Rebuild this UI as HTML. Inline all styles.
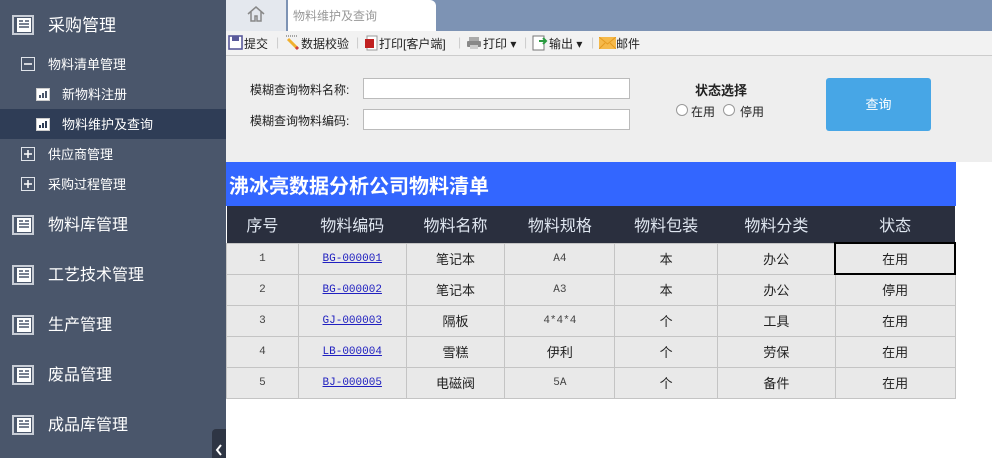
<!DOCTYPE html>
<html><head><meta charset="utf-8">
<style>
*{margin:0;padding:0;box-sizing:border-box}
body{width:992px;height:458px;overflow:hidden;background:#fff;font-family:"Liberation Sans","Noto Sans CJK SC",sans-serif;position:relative}
.side{position:absolute;left:0;top:0;width:226px;height:458px;background:#4a566b;color:#fff}
.it{position:absolute;left:0;width:226px;font-size:16px}
.ic{position:absolute;left:12px;width:22px;height:22px}
.sub{font-size:13px}
.abs{position:absolute}
.top{position:absolute;left:226px;top:0;width:766px;height:31px;background:#7d93b4}
.tb{position:absolute;left:226px;top:31px;width:766px;height:25px;background:#f2f2f2;border-bottom:1px solid #ccc;font-size:12px;color:#222}
.tb span{position:absolute;top:4px}
.form{position:absolute;left:226px;top:56px;width:766px;height:106px;background:#eeeeee;font-size:12px;color:#222}
.inp{position:absolute;width:267px;height:21px;background:#fff;border:1px solid #bbb}
table{position:absolute;left:226px;top:206px;border-collapse:collapse;width:730px}
th{background:#2a2f3e;color:#dfe6f0;font-weight:normal;font-size:16px;height:37px}
td{background:#e9e9e9;border:1px solid #c4c4c4;height:31px;text-align:center;font-size:13px;color:#222}
td.m{font-family:"Liberation Mono","Noto Sans CJK SC",monospace;font-size:11px;color:#444}
td a{color:#2020c0;text-decoration:underline}
</style></head><body>
<div class="side">
  <div class="abs" style="left:0;top:109px;width:226px;height:30px;background:#2f3d56"></div>
  <svg class="ic" style="top:14px" viewBox="0 0 22 22"><rect x="1" y="2" width="20" height="18" fill="none" stroke="#c8cdd6" stroke-width="2"/><rect x="5" y="4" width="14" height="14" fill="#fff"/><path d="M7 7h4M7 10h10M7 13h10M13 7h4" stroke="#4a566b" stroke-width="1.5"/></svg>
  <div class="it" style="top:11px;left:48px;font-size:17px">采购管理</div>
  <svg class="abs" style="left:21px;top:57px" width="14" height="14"><rect x="0.5" y="0.5" width="13" height="13" fill="none" stroke="#e0e4ea"/><path d="M3 7h8" stroke="#fff" stroke-width="1.5"/></svg>
  <div class="it sub" style="top:54px;left:48px">物料清单管理</div>
  <svg class="abs" style="left:36px;top:88px" width="14" height="13"><rect x="0.5" y="0.5" width="13" height="12" fill="#fff" stroke="#ccc"/><path d="M4 10V7M7 10V5M10 10V3" stroke="#4a566b" stroke-width="2"/></svg>
  <div class="it sub" style="top:84px;left:62px">新物料注册</div>
  <svg class="abs" style="left:36px;top:118px" width="14" height="13"><rect x="0.5" y="0.5" width="13" height="12" fill="#fff" stroke="#ccc"/><path d="M4 10V7M7 10V5M10 10V3" stroke="#2f3d56" stroke-width="2"/></svg>
  <div class="it sub" style="top:114px;left:62px">物料维护及查询</div>
  <svg class="abs" style="left:21px;top:147px" width="14" height="14"><rect x="0.5" y="0.5" width="13" height="13" fill="none" stroke="#e0e4ea"/><path d="M3 7h8M7 3v8" stroke="#fff" stroke-width="1.5"/></svg>
  <div class="it sub" style="top:144px;left:48px">供应商管理</div>
  <svg class="abs" style="left:21px;top:177px" width="14" height="14"><rect x="0.5" y="0.5" width="13" height="13" fill="none" stroke="#e0e4ea"/><path d="M3 7h8M7 3v8" stroke="#fff" stroke-width="1.5"/></svg>
  <div class="it sub" style="top:174px;left:48px">采购过程管理</div>
  <svg class="ic" style="top:214px" viewBox="0 0 22 22"><rect x="1" y="2" width="20" height="18" fill="none" stroke="#c8cdd6" stroke-width="2"/><rect x="5" y="4" width="14" height="14" fill="#fff"/><path d="M7 7h4M7 10h10M7 13h10M13 7h4" stroke="#4a566b" stroke-width="1.5"/></svg>
  <div class="it" style="top:211px;left:48px">物料库管理</div>
  <svg class="ic" style="top:264px" viewBox="0 0 22 22"><rect x="1" y="2" width="20" height="18" fill="none" stroke="#c8cdd6" stroke-width="2"/><rect x="5" y="4" width="14" height="14" fill="#fff"/><path d="M7 7h4M7 10h10M7 13h10M13 7h4" stroke="#4a566b" stroke-width="1.5"/></svg>
  <div class="it" style="top:261px;left:48px">工艺技术管理</div>
  <svg class="ic" style="top:314px" viewBox="0 0 22 22"><rect x="1" y="2" width="20" height="18" fill="none" stroke="#c8cdd6" stroke-width="2"/><rect x="5" y="4" width="14" height="14" fill="#fff"/><path d="M7 7h4M7 10h10M7 13h10M13 7h4" stroke="#4a566b" stroke-width="1.5"/></svg>
  <div class="it" style="top:311px;left:48px">生产管理</div>
  <svg class="ic" style="top:364px" viewBox="0 0 22 22"><rect x="1" y="2" width="20" height="18" fill="none" stroke="#c8cdd6" stroke-width="2"/><rect x="5" y="4" width="14" height="14" fill="#fff"/><path d="M7 7h4M7 10h10M7 13h10M13 7h4" stroke="#4a566b" stroke-width="1.5"/></svg>
  <div class="it" style="top:361px;left:48px">废品管理</div>
  <svg class="ic" style="top:414px" viewBox="0 0 22 22"><rect x="1" y="2" width="20" height="18" fill="none" stroke="#c8cdd6" stroke-width="2"/><rect x="5" y="4" width="14" height="14" fill="#fff"/><path d="M7 7h4M7 10h10M7 13h10M13 7h4" stroke="#4a566b" stroke-width="1.5"/></svg>
  <div class="it" style="top:411px;left:48px">成品库管理</div>
  <div class="abs" style="left:212px;top:429px;width:14px;height:29px;background:#2e3544;border-radius:4px 0 0 0"></div>
  <svg class="abs" style="left:214px;top:443px" width="10" height="14"><path d="M7 2L3 7l4 5" stroke="#fff" stroke-width="2" fill="none"/></svg>
</div>
<div class="top">
  <div class="abs" style="left:0;top:0;width:60px;height:31px;background:#e4e8ee"></div>
  <svg class="abs" style="left:20px;top:5px" width="20" height="18"><path d="M2 9L10 2l8 7M5 7v9h4v-5h2v5h4V7" fill="none" stroke="#888" stroke-width="1.5"/></svg>
  <div class="abs" style="left:62px;top:0;width:148px;height:31px;background:#fff;border-radius:0 6px 0 0;font-size:12px;color:#999;padding:7px 0 0 5px">物料维护及查询</div>
</div>
<div class="tb">
  <svg class="abs" style="left:2px;top:4px" width="15" height="15"><rect x="1" y="1" width="13" height="13" fill="#fff" stroke="#5a5a9a" stroke-width="1.6"/><rect x="4" y="1" width="7" height="5" fill="#5a5a9a"/></svg>
  <span style="left:18px">提交</span><span style="left:50px;color:#ccc">|</span>
  <svg class="abs" style="left:58px;top:3px" width="16" height="17"><path d="M2 2h12" stroke="#555" stroke-dasharray="1 1"/><path d="M4 5l9 9" stroke="#f0b030" stroke-width="3"/><path d="M12 13l2 2" stroke="#d04040" stroke-width="3"/></svg>
  <span style="left:75px">数据校验</span><span style="left:130px;color:#ccc">|</span>
  <svg class="abs" style="left:138px;top:4px" width="14" height="16"><rect x="3" y="1" width="10" height="14" fill="#fff" stroke="#999"/><rect x="1" y="4" width="9" height="9" fill="#c02020"/></svg>
  <span style="left:153px">打印[客户端]</span><span style="left:232px;color:#ccc">|</span>
  <svg class="abs" style="left:240px;top:5px" width="16" height="14"><rect x="3" y="1" width="10" height="4" fill="#aaa"/><rect x="1" y="5" width="14" height="6" rx="1" fill="#888"/><rect x="4" y="9" width="8" height="4" fill="#ccc"/></svg>
  <span style="left:257px">打印 ▾</span><span style="left:298px;color:#ccc">|</span>
  <svg class="abs" style="left:306px;top:3px" width="16" height="17"><rect x="1" y="2" width="11" height="14" fill="#fff" stroke="#777"/><path d="M7 7h7M11 4l3 3-3 3" stroke="#2a9a40" stroke-width="2" fill="none"/></svg>
  <span style="left:323px">输出 ▾</span><span style="left:365px;color:#ccc">|</span>
  <svg class="abs" style="left:373px;top:6px" width="17" height="12"><rect x="0" y="0" width="17" height="12" fill="#f5b94a"/><path d="M0 0l8.5 7L17 0M0 12l6-6M17 12l-6-6" stroke="#e49a20" fill="none"/></svg>
  <span style="left:390px">邮件</span>
</div>
<div class="form">
  <div class="abs" style="left:24px;top:25px">模糊查询物料名称:</div>
  <div class="inp" style="left:137px;top:22px"></div>
  <div class="abs" style="left:24px;top:56px">模糊查询物料编码:</div>
  <div class="inp" style="left:137px;top:53px"></div>
  <div class="abs" style="left:469px;top:24px;font-weight:bold;font-size:13px">状态选择</div>
  <div class="abs" style="left:450px;top:48px;width:12px;height:12px;border:1px solid #999;border-radius:50%;background:#fff"></div>
  <div class="abs" style="left:465px;top:47px">在用</div>
  <div class="abs" style="left:497px;top:48px;width:12px;height:12px;border:1px solid #999;border-radius:50%;background:#fff"></div>
  <div class="abs" style="left:514px;top:47px">停用</div>
  <div class="abs" style="left:600px;top:22px;width:105px;height:53px;background:#47a6e6;border-radius:3px;color:#fff;font-size:13px;text-align:center;line-height:53px">查询</div>
</div>
<div class="abs" style="left:226px;top:162px;width:730px;height:44px;background:#3366ff;color:#fff;font-size:20px;font-weight:bold;padding:8px 0 0 3px">沸冰亮数据分析公司物料清单</div>
<table>
<colgroup><col style="width:72px"><col style="width:108px"><col style="width:99px"><col style="width:110px"><col style="width:103px"><col style="width:118px"><col style="width:120px"></colgroup>
<tr><th>序号</th><th>物料编码</th><th>物料名称</th><th>物料规格</th><th>物料包装</th><th>物料分类</th><th>状态</th></tr>
<tr><td class="m">1</td><td class="m"><a>BG-000001</a></td><td>笔记本</td><td class="m">A4</td><td>本</td><td>办公</td><td style="border:2px solid #000">在用</td></tr>
<tr><td class="m">2</td><td class="m"><a>BG-000002</a></td><td>笔记本</td><td class="m">A3</td><td>本</td><td>办公</td><td>停用</td></tr>
<tr><td class="m">3</td><td class="m"><a>GJ-000003</a></td><td>隔板</td><td class="m">4*4*4</td><td>个</td><td>工具</td><td>在用</td></tr>
<tr><td class="m">4</td><td class="m"><a>LB-000004</a></td><td>雪糕</td><td>伊利</td><td>个</td><td>劳保</td><td>在用</td></tr>
<tr><td class="m">5</td><td class="m"><a>BJ-000005</a></td><td>电磁阀</td><td class="m">5A</td><td>个</td><td>备件</td><td>在用</td></tr>
</table>
</body></html>
